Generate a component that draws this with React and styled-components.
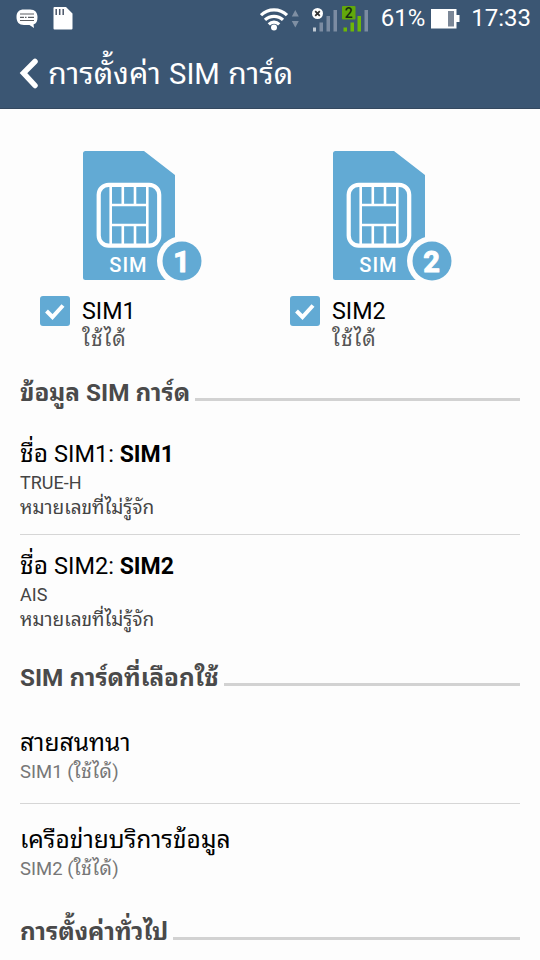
import React from 'react';
import styled, { createGlobalStyle } from 'styled-components';

const GlobalStyle = createGlobalStyle`
    *{
        margin:0;
        padding:0;
        box-sizing:border-box;
    }
    body{
        background:#fdfdfd;
        font-family:Roboto, "Noto Sans Thai Looped", Loma, sans-serif;
        color:#000;
        overflow:hidden;
    }
`;

const ChatIcon = () => (
    <svg width="22" height="20" viewBox="0 0 22 20">
        <path d="M8 .5h6c5 0 7.500 3 7.500 7.500 0 4-1 6.500-4 7.500l.5 3.500-4.500-3H8c-5 0-7.500-3-7.500-8S3 .5 8 .5z" fill="#fff" />
        <path d="M4 5h14M4 11.500h14" stroke="#5c5f63" strokeWidth="1.200" />
        <path d="M4 8.300h4M9 8.300h1.500M12 8.300h6" stroke="#5c5f63" strokeWidth="1.200" />
    </svg>
);

const CardIcon = () => (
    <svg width="20" height="23" viewBox="0 0 20 23">
        <path d="M1.500 0H13l6.500 6.500V21.500a1 1 0 0 1-1 1h-17a1 1 0 0 1-1-1V1a1 1 0 0 1 1-1z" fill="#fff" />
        <path d="M3.200 2v6M6.700 2v6M10.200 2v6" stroke="#4a5668" strokeWidth="1.500" />
    </svg>
);

const WifiIcon = () => (
    <svg width="40" height="26" viewBox="0 0 40 26">
        <g fill="none" stroke="#fff" strokeWidth="3.200">
            <path d="M1 9.200a18.500 18.500 0 0 1 26 0" />
            <path d="M5 13.900a13 13 0 0 1 18 0" />
            <path d="M8.800 18.300a7.500 7.500 0 0 1 10.400 0" />
        </g>
        <circle cx="14" cy="21.500" r="3" fill="#fff" />
        <path d="M31.800 10.500l3.500-6.500 3.500 6.500zM31.800 15l3.500 6.500 3.500-6.500z" fill="#7f8fa3" />
    </svg>
);

const NoSignalIcon = () => (
    <svg width="26" height="26" viewBox="0 0 26 26">
        <path d="M1 21.500h3v4h-3z" fill="#c0c9d3" />
        <path d="M7.500 16.500h3.500v9h-3.500zM14.500 10h3.500v15.500h-3.500zM21.500 4h3.500v21.500h-3.500z" fill="#7c8ca2" />
        <circle cx="5.500" cy="7.500" r="5.500" fill="#fff" />
        <path d="M3.200 5.200l4.600 4.600M7.800 5.200l-4.600 4.600" stroke="#333" strokeWidth="1.800" />
    </svg>
);

const DataSignalIcon = () => (
    <svg width="27" height="26" viewBox="0 0 27 26">
        <path d="M1.500 21.500h3.500v4h-3.500zM8.500 16.500h3.500v9h-3.500zM15.500 10h3.500v15.500h-3.500z" fill="#6db707" />
        <path d="M22.500 4h3.500v21.500h-3.500z" fill="#7c8ca2" />
        <rect x="0" y="0" width="13.500" height="13.500" rx="1" fill="#62a80b" />
        <text x="6.700" y="11.700" textAnchor="middle" fontFamily="Roboto" fontWeight="500" fontSize="14" fill="#172b12">2</text>
    </svg>
);

const BatteryIcon = () => (
    <svg width="30" height="20" viewBox="0 0 30 20">
        <path d="M0 0h25.500v6h3v7h-3v6.500H0z" fill="#fff" />
        <path d="M17 2h6v15.500h-6z" fill="#7b8797" />
    </svg>
);

const BackIcon = () => (
    <svg width="20" height="32" viewBox="0 0 20 32">
        <path d="M16 4.500L4.500 16 16 28.500" fill="none" stroke="#fff" strokeWidth="5.500" strokeLinecap="round" strokeLinejoin="miter" />
    </svg>
);

const SimIcon = ({ number }) => (
    <svg width="120" height="132" viewBox="0 0 120 132">
        <path d="M2.500 0H61l31 24V129H2.500A2.500 2.500 0 0 1 0 126.500V2.500A2.500 2.500 0 0 1 2.500 0z" fill="#62aad4" />
        <rect x="15.700" y="33.800" width="60.500" height="60.800" rx="10" fill="none" stroke="#fff" strokeWidth="4.200" />
        <g fill="none" stroke="#fff" strokeWidth="2.600">
            <path d="M27.700 34v60M64.300 34v60M27.700 54h36.600M27.700 74h36.600" />
            <path d="M39.800 34v20M52 34v20M39.800 74v20M52 74v20" />
        </g>
        <text x="26.300" y="121" fontFamily="Roboto" fontWeight="500" fontSize="20" letterSpacing="1" fill="#fff">SIM</text>
        <circle cx="99" cy="110" r="25" fill="#fdfdfd" />
        <circle cx="99" cy="110" r="19.500" fill="#62aad4" />
        <text x="98.500" y="120.800" textAnchor="middle" fontFamily="Roboto" fontWeight="700" fontSize="29" fill="#fff" stroke="#fff" strokeWidth="1" strokeLinejoin="round">{number}</text>
    </svg>
);

const CheckIcon = () => (
    <svg width="20" height="17" viewBox="0 0 20 17">
        <path d="M1.500 8l6 6L18 2.500" fill="none" stroke="#fff" strokeWidth="4" />
    </svg>
);

const SimSlot = ({ number, status }) => (
    <Slot>
        <SimIcon number={number} />
        <SlotRow>
            <Checkbox><CheckIcon /></Checkbox>
            <div>
                <SlotName>SIM{number}</SlotName>
                <SlotStatus>{status}</SlotStatus>
            </div>
        </SlotRow>
    </Slot>
);

const App = () => {
    return (
        <Page>
            <GlobalStyle />
            <Header>
                <StatusBar>
                    <Notices>
                        <ChatIcon />
                        <CardIcon />
                    </Notices>
                    <Indicators>
                        <WifiIcon />
                        <Signals>
                            <NoSignalIcon />
                            <DataSignalIcon />
                        </Signals>
                        <Percent>61%</Percent>
                        <BatteryIcon />
                        <Clock>17:33</Clock>
                    </Indicators>
                </StatusBar>
                <TitleBar>
                    <BackIcon />
                    <Title><Thai>การตั้งค่า</Thai> SIM <Thai>การ์ด</Thai></Title>
                </TitleBar>
            </Header>

            <Slots>
                <SimSlot number="1" status="ใช้ได้" />
                <SimSlot number="2" status="ใช้ได้" />
            </Slots>

            <Section>
                <SectionTitle>ข้อมูล SIM การ์ด</SectionTitle>
                <Item $height={123} $top={26}>
                    <ItemTitle><Thai>ชื่อ </Thai>SIM1: <b>SIM1</b></ItemTitle>
                    <Carrier>TRUE-H</Carrier>
                    <Detail>หมายเลขที่ไม่รู้จัก</Detail>
                </Item>
                <Item $height={124} $top={15} $last>
                    <ItemTitle><Thai>ชื่อ </Thai>SIM2: <b>SIM2</b></ItemTitle>
                    <Carrier>AIS</Carrier>
                    <Detail>หมายเลขที่ไม่รู้จัก</Detail>
                </Item>
            </Section>

            <Section>
                <SectionTitle>SIM การ์ดที่เลือกใช้</SectionTitle>
                <Item $height={107} $top={30}>
                    <ItemTitle><Thai>สายสนทนา</Thai></ItemTitle>
                    <Choice>SIM1 (<Thai>ใช้ได้</Thai>)</Choice>
                </Item>
                <Item $height={109} $top={20} $last>
                    <ItemTitle><Thai>เครือข่ายบริการข้อมูล</Thai></ItemTitle>
                    <Choice>SIM2 (<Thai>ใช้ได้</Thai>)</Choice>
                </Item>
            </Section>

            <Section>
                <SectionTitle>การตั้งค่าทั่วไป</SectionTitle>
            </Section>
        </Page>
    );
};

export default App;

const Page = styled.div`
    width:540px;
    height:960px;
    overflow:hidden;
    background:#fdfdfd;
`;

// Thai glyphs run a little small next to Roboto
const Thai = styled.span`
    font-size:1.045em;
    line-height:1;
`;

const Header = styled.header`
    height:109px;
    background:#3b5673;
    border-bottom:1px solid #34485f;
    color:#fff;
`;

const StatusBar = styled.div`
    display:flex;
    justify-content:space-between;
    height:37px;
    padding:0 9px 0 16px;
`;

const Notices = styled.div`
    display:flex;
    align-items:center;
    gap:15px;
`;

const Indicators = styled.div`
    display:flex;
    align-items:center;
    font-size:24px;
    line-height:37px;
`;

const Signals = styled.div`
    display:flex;
    gap:4px;
    margin-left:12px;
`;

const Percent = styled.span`
    margin:0 6px 0 12px;
`;

const Clock = styled.span`
    margin-left:10px;
`;

const TitleBar = styled.div`
    display:flex;
    align-items:center;
    height:72px;
    padding-left:19px;
`;

const Title = styled.h1`
    margin-left:9px;
    padding-top:2px;
    font-size:29.2px;
    font-weight:400;
    line-height:40px;
    white-space:nowrap;
    word-spacing:1px;
`;

const Slots = styled.div`
    display:flex;
    height:265px;
    padding:42px 0 0 40px;
`;

const Slot = styled.div`
    width:250.5px;
    > svg{
        display:block;
        margin-left:43px;
    }
`;

const SlotRow = styled.div`
    display:flex;
    gap:12px;
    padding-top:13px;
`;

const Checkbox = styled.span`
    display:flex;
    align-items:center;
    justify-content:center;
    width:30px;
    height:30px;
    border-radius:3px;
    background:#62aad4;
`;

const SlotName = styled.div`
    font-size:23.3px;
    line-height:30px;
`;

const SlotStatus = styled.div`
    font-size:21px;
    line-height:27px;
    letter-spacing:1.1px;
    color:#555;
`;

const Section = styled.section`
    padding:0 20px;
`;

const SectionTitle = styled.h2`
    display:flex;
    align-items:center;
    height:38px;
    font-size:24.3px;
    font-weight:700;
    line-height:38px;
    color:#4a4a4a;
    white-space:nowrap;
    &::after{
        content:"";
        flex:1;
        height:3px;
        margin:13px 0 0 5px;
        background:#d2d2d2;
    }
`;

const Item = styled.div`
    height:${({ $height }) => $height}px;
    padding-top:${({ $top }) => $top}px;
    border-bottom:${({ $last }) => ($last ? 'none' : '1px solid #d6d6d6')};
`;

const ItemTitle = styled.div`
    font-size:23.500px;
    height:32px;
    line-height:32px;
    white-space:nowrap;
    b{
        font-size:23px;
        line-height:1;
    }
`;

const Detail = styled.div`
    font-size:19px;
    line-height:25px;
    color:#444;
`;

const Carrier = styled(Detail)`
    font-size:18px;
`;

const Choice = styled.div`
    font-size:18.500px;
    line-height:26px;
    color:#777;
    ${Thai}{
        letter-spacing:.4px;
    }
`;
